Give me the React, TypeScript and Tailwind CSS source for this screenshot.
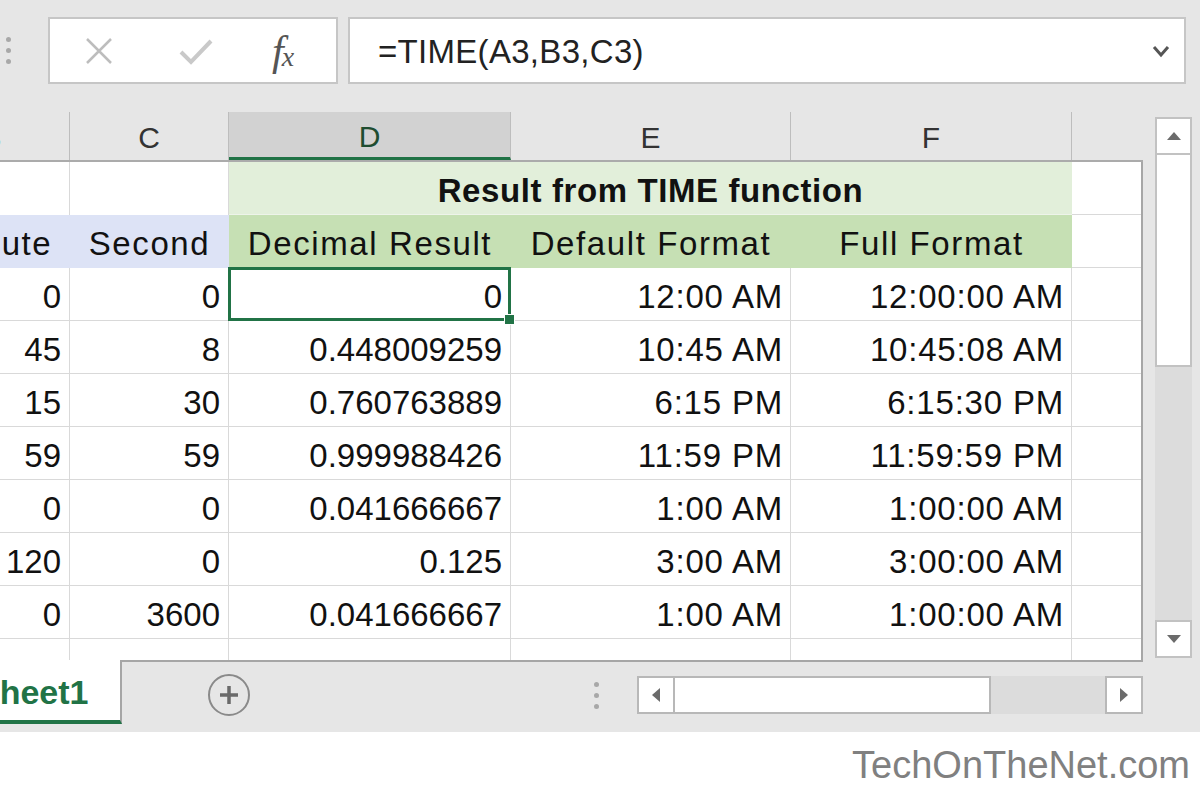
import React from "react";

const COLS = [144, 159, 282, 280, 281, 71];

const ROWS: string[][] = [
  ["0", "0", "0", "12:00 AM", "12:00:00 AM"],
  ["45", "8", "0.448009259", "10:45 AM", "10:45:08 AM"],
  ["15", "30", "0.760763889", "6:15 PM", "6:15:30 PM"],
  ["59", "59", "0.999988426", "11:59 PM", "11:59:59 PM"],
  ["0", "0", "0.041666667", "1:00 AM", "1:00:00 AM"],
  ["120", "0", "0.125", "3:00 AM", "3:00:00 AM"],
  ["0", "3600", "0.041666667", "1:00 AM", "1:00:00 AM"],
];

function Dots({ className = "" }: { className?: string }) {
  return (
    <div className={`flex flex-col gap-[6px] ${className}`}>
      <span className="w-[5px] h-[5px] rounded-full bg-[#a8a8a8]" />
      <span className="w-[5px] h-[5px] rounded-full bg-[#a8a8a8]" />
      <span className="w-[5px] h-[5px] rounded-full bg-[#a8a8a8]" />
    </div>
  );
}

function Tri({ dir }: { dir: "up" | "down" | "left" | "right" }) {
  const pts = {
    up: "2,11 16,11 9,3",
    down: "2,3 16,3 9,11",
    left: "11,2 11,16 3,9",
    right: "3,2 3,16 11,9",
  }[dir];
  const horiz = dir === "left" || dir === "right";
  return (
    <svg width={horiz ? 14 : 18} height={horiz ? 18 : 14} viewBox={horiz ? "0 0 14 18" : "0 0 18 14"}>
      <polygon points={pts} fill="#6b6b6b" />
    </svg>
  );
}

function DataRow({ vals }: { vals: string[] }) {
  return (
    <div className="flex h-[53px] shrink-0 -ml-[74px]">
      {vals.map((v, i) => (
        <div
          key={i}
          style={{ width: COLS[i] }}
          className={`relative shrink-0 h-full flex items-center justify-end pt-[5px] border-r border-b border-[#d9d9d9] ${
            i >= 3 ? "tracking-[0.8px] pr-[7px]" : "pr-[8px]"
          }`}
        >
          {v}
          {i === 2 && v === "0" && (
            <div className="absolute -left-[1px] -top-[1px] -right-[1px] -bottom-[1px] border-[3px] border-[#217346] z-10">
              <div className="absolute -right-[7px] -bottom-[7px] w-[11px] h-[11px] bg-[#217346] border border-white" />
            </div>
          )}
        </div>
      ))}
      <div style={{ width: COLS[5] }} className="shrink-0 h-full border-r border-b border-[#d9d9d9]" />
    </div>
  );
}

export default function App() {
  return (
    <div className="w-[1200px] h-[800px] bg-white flex flex-col overflow-hidden font-['Liberation_Sans',Arial,sans-serif] text-[#111]">
      {/* formula bar */}
      <div className="h-[112px] shrink-0 bg-[#e6e6e6] flex items-start pt-[17px]">
        <div className="w-[48px] pl-[6px] pt-[20px]">
          <Dots />
        </div>
        <div className="w-[290px] h-[67px] bg-white border-2 border-[#c6c6c6] flex items-center pl-[34px]">
          <svg width="30" height="30" viewBox="0 0 30 30">
            <path d="M3 3 L27 27 M27 3 L3 27" stroke="#bdbdbd" strokeWidth="2.5" />
          </svg>
          <svg width="36" height="30" viewBox="0 0 36 30" className="ml-[64px]">
            <path d="M3 16 L13 26 L33 5" stroke="#c9c9c9" strokeWidth="4" fill="none" />
          </svg>
          <div className="ml-[58px] flex items-end font-['Liberation_Serif',serif] italic text-[#555] leading-none">
            <span className="text-[42px]">f</span>
            <span className="text-[28px] -ml-[2px] mb-[1px]">x</span>
          </div>
        </div>
        <div className="ml-[10px] w-[838px] h-[67px] bg-white border-2 border-[#c6c6c6] flex items-center justify-between pl-[28px] pr-[14px]">
          <span className="text-[33px] text-[#222] pt-[2px] tracking-[0.3px]">=TIME(A3,B3,C3)</span>
          <svg width="18" height="14" viewBox="0 0 18 14">
            <path d="M2 3 L9 11 L16 3" stroke="#555" strokeWidth="3" fill="none" />
          </svg>
        </div>
      </div>

      {/* grid + vertical scroll */}
      <div className="flex h-[548px] shrink-0">
        <div className="w-[1143px] flex flex-col overflow-hidden">
          {/* column headers */}
          <div className="flex h-[50px] shrink-0 -ml-[74px] bg-[#e6e6e6] border-b-2 border-[#ababab] text-[30px] text-[#333]">
            {["B", "C", "D", "E", "F"].map((c, i) => (
              <div
                key={c}
                style={{ width: COLS[i] }}
                className={`shrink-0 h-full flex items-center justify-center pt-[3px] border-r border-[#bdbdbd] ${
                  c === "D" ? "bg-[#d2d2d2] border-b-[3px] border-b-[#217346] text-[#1e4d30] -mb-[2px] h-[50px]" : ""
                } ${c === "B" ? "pr-[12px] text-[#3a9bb0]" : ""}`}
              >
                {c}
              </div>
            ))}
          </div>

          {/* body */}
          <div className="flex-1 bg-white border-r-2 border-[#a6a6a6] overflow-hidden text-[33px]">
            {/* row 1 */}
            <div className="flex h-[53px] shrink-0 -ml-[74px]">
              <div style={{ width: COLS[0] }} className="shrink-0 border-r border-[#d9d9d9]" />
              <div style={{ width: COLS[1] }} className="shrink-0 border-r border-[#d9d9d9]" />
              <div className="w-[843px] shrink-0 bg-[#e2efda] border-b border-[#eef4ea] flex items-center justify-center pt-[5px] font-bold tracking-[0.6px]">
                Result from TIME function
              </div>
              <div style={{ width: COLS[5] }} className="shrink-0 border-r border-b border-[#d9d9d9]" />
            </div>
            {/* row 2 */}
            <div className="flex h-[53px] shrink-0 -ml-[74px] tracking-[1.6px]">
              <div style={{ width: COLS[0] }} className="shrink-0 bg-[#dde3f6] flex items-center justify-center pt-[5px]">
                Minute
              </div>
              <div style={{ width: COLS[1] }} className="shrink-0 bg-[#dde3f6] flex items-center justify-center pt-[5px]">
                Second
              </div>
              {["Decimal Result", "Default Format", "Full Format"].map((t, i) => (
                <div
                  key={t}
                  style={{ width: COLS[i + 2] }}
                  className="shrink-0 bg-[#c6e0b4] flex items-center justify-center pt-[5px]"
                >
                  {t}
                </div>
              ))}
              <div style={{ width: COLS[5] }} className="shrink-0 border-r border-b border-[#d9d9d9]" />
            </div>
            {ROWS.map((r, i) => (
              <DataRow key={i} vals={r} />
            ))}
            <DataRow vals={["", "", "", "", ""]} />
          </div>
        </div>

        {/* vertical scrollbar */}
        <div className="flex-1 bg-[#e6e6e6] pl-[12px] pt-[5px] pb-[2px] flex flex-col">
          <div className="w-[37px] h-[38px] bg-white border-2 border-[#c2c2c2] flex items-center justify-center">
            <Tri dir="up" />
          </div>
          <div className="w-[37px] h-[214px] bg-white border-2 border-[#c2c2c2] -mt-[2px]" />
          <div className="w-[37px] flex-1 bg-[#dcdcdc]" />
          <div className="w-[37px] h-[38px] bg-white border-2 border-[#c2c2c2] flex items-center justify-center">
            <Tri dir="down" />
          </div>
        </div>
      </div>

      {/* sheet tabs + horizontal scroll */}
      <div className="h-[72px] shrink-0 bg-[#e6e6e6] flex items-start">
        <div className="w-[122px] h-[64px] bg-white border-r-2 border-[#a6a6a6] border-b-4 border-b-[#217346] flex items-center overflow-hidden">
          <span className="text-[34px] font-bold text-[#217346] -ml-[23px] whitespace-nowrap pt-[4px]">Sheet1</span>
        </div>
        <div className="w-[1021px] h-full border-t-2 border-[#a6a6a6] flex items-center pb-[4px]">
          <div className="ml-[86px] w-[42px] h-[42px] rounded-full border-2 border-[#8a8a8a] flex items-center justify-center">
            <svg width="22" height="22" viewBox="0 0 22 22">
              <path d="M11 2 V20 M2 11 H20" stroke="#6a6a6a" strokeWidth="3.5" />
            </svg>
          </div>
          <Dots className="ml-[344px]" />
          <div className="ml-[38px] flex-1 h-[38px] flex">
            <div className="w-[38px] h-full bg-white border-2 border-[#b8b8b8] flex items-center justify-center">
              <Tri dir="left" />
            </div>
            <div className="w-[318px] h-full bg-white border-2 border-[#b8b8b8] -ml-[2px]" />
            <div className="flex-1 h-full bg-[#dcdcdc]" />
            <div className="w-[38px] h-full bg-white border-2 border-[#b8b8b8] flex items-center justify-center">
              <Tri dir="right" />
            </div>
          </div>
        </div>
      </div>

      {/* watermark */}
      <div className="flex-1 flex items-center justify-end pr-[10px] pb-[2px]">
        <span className="text-[38px] text-[#808080]">TechOnTheNet.com</span>
      </div>
    </div>
  );
}
